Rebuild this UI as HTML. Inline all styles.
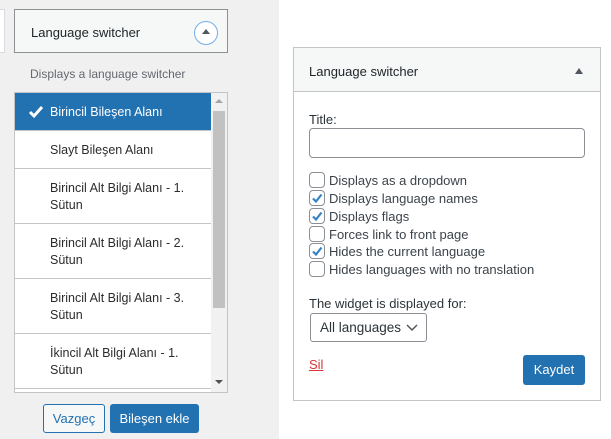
<!DOCTYPE html>
<html><head><meta charset="utf-8"><style>
*{box-sizing:border-box;margin:0;padding:0}
body{width:611px;height:439px;background:#fff;font-family:"Liberation Sans",sans-serif;font-size:13px;color:#1d2327;position:relative;overflow:hidden}
.a{position:absolute}
.gray{left:0;top:0;width:279px;height:439px;background:#f0f0f1}
.row{position:absolute;left:0;width:196px;border-bottom:1px solid #c3c4c7;padding-left:35px;padding-top:2px;display:flex;align-items:center;line-height:17px;font-size:12.5px;color:#2c2c2c}
.cb{position:absolute;left:309px;width:16px;height:16px;border:1px solid #8c8f94;border-radius:4px;background:#fff}
.lbl{position:absolute;left:329px;font-size:13px;color:#3c434a}
</style></head><body>
<div class="a gray"></div>
<div class="a" style="left:-5px;top:9px;width:10px;height:44px;background:#fff;border:1px solid #dcdcde"></div>
<div class="a" style="left:14px;top:9px;width:214px;height:44px;background:#f6f7f7;border:1px solid #8c8f94"></div>
<div class="a" style="left:31px;top:25px;font-size:13px;color:#1d2327">Language switcher</div>
<div class="a" style="left:194px;top:21px;width:24px;height:24px;border:1px solid #72aee6;border-radius:50%;background:#fff"></div>
<div class="a" style="left:202px;top:29px;width:0;height:0;border-left:4px solid transparent;border-right:4px solid transparent;border-bottom:5px solid #50575e"></div>
<div class="a" style="left:30px;top:67px;font-size:12px;color:#646970">Displays a language switcher</div>
<div class="a" style="left:14px;top:92px;width:214px;height:301px;background:#fff;border:1px solid #c3c4c7;overflow:hidden">
 <div class="row" style="top:0;height:38px;background:#2271b1;color:#fff;border-bottom:1px solid #c3c4c7"><svg class="a" style="left:13px;top:12px" width="16" height="14"><path d="M2 7l4 4 8-9" fill="none" stroke="#fff" stroke-width="3"/></svg>Birincil Bileşen Alanı</div>
 <div class="row" style="top:38px;height:38px">Slayt Bileşen Alanı</div>
 <div class="row" style="top:76px;height:55px">Birincil Alt Bilgi Alanı - 1.<br>Sütun</div>
 <div class="row" style="top:131px;height:55px">Birincil Alt Bilgi Alanı - 2.<br>Sütun</div>
 <div class="row" style="top:186px;height:55px">Birincil Alt Bilgi Alanı - 3.<br>Sütun</div>
 <div class="row" style="top:241px;height:55px">İkincil Alt Bilgi Alanı - 1.<br>Sütun</div>
 <div class="a" style="left:196px;top:0;width:17px;height:300px;background:#f1f1f1"></div>
 <div class="a" style="left:198px;top:18px;width:12px;height:197px;background:#c1c1c1"></div>
 <div class="a" style="left:200px;top:6px;border-left:4px solid transparent;border-right:4px solid transparent;border-bottom:4px solid #a3a3a3"></div>
 <div class="a" style="left:200px;top:287px;border-left:4px solid transparent;border-right:4px solid transparent;border-top:4px solid #505050"></div>
</div>
<div class="a" style="left:43px;top:404px;width:62px;height:29px;border:1px solid #2271b1;border-radius:3px;background:#f6f7f7;color:#2271b1;text-align:center;line-height:27px">Vazgeç</div>
<div class="a" style="left:110px;top:404px;width:89px;height:29px;border-radius:3px;background:#2271b1;color:#fff;text-align:center;line-height:29px">Bileşen ekle</div>

<div class="a" style="left:293px;top:47px;width:308px;height:354px;border:1px solid #c3c4c7;background:#fff"></div>
<div class="a" style="left:294px;top:48px;width:306px;height:44px;background:#f6f7f7;border-bottom:1px solid #c3c4c7"></div>
<div class="a" style="left:309px;top:64px;color:#1d2327">Language switcher</div>
<div class="a" style="left:575px;top:68px;border-left:4px solid transparent;border-right:4px solid transparent;border-bottom:6px solid #50575e"></div>
<div class="a" style="left:309px;top:112px;color:#2c3338">Title:</div>
<div class="a" style="left:309px;top:128px;width:276px;height:30px;border:1px solid #8c8f94;border-radius:4px"></div>
<div class="cb" style="top:172px"></div><div class="lbl" style="top:173px">Displays as a dropdown</div>
<div class="cb" style="top:190px"></div><div class="lbl" style="top:191px">Displays language names</div>
<div class="cb" style="top:208px"></div><div class="lbl" style="top:209px">Displays flags</div>
<div class="cb" style="top:226px"></div><div class="lbl" style="top:227px">Forces link to front page</div>
<div class="cb" style="top:243px"></div><div class="lbl" style="top:244px">Hides the current language</div>
<div class="cb" style="top:261px"></div><div class="lbl" style="top:262px">Hides languages with no translation</div>
<svg class="a" style="left:309px;top:190px" width="16" height="72"><g fill="none" stroke="#3582c4" stroke-width="2.2"><path d="M4 8.5l3 3 5.5-7"/><path d="M4 26.5l3 3 5.5-7"/><path d="M4 61.5l3 3 5.5-7"/></g></svg>
<div class="a" style="left:309px;top:296px;color:#2c3338">The widget is displayed for:</div>
<div class="a" style="left:310px;top:313px;width:117px;height:29px;border:1px solid #8c8f94;border-radius:3px;padding-left:9px;line-height:27px;font-size:13.5px;color:#2c3338">All languages</div>
<svg class="a" style="left:406px;top:324px" width="12" height="8"><path d="M1 1l5 5 5-5" fill="none" stroke="#50575e" stroke-width="1.5"/></svg>
<div class="a" style="left:309px;top:357px;color:#d63638;text-decoration:underline">Sil</div>
<div class="a" style="left:523px;top:355px;width:62px;height:30px;border-radius:3px;background:#2271b1;color:#fff;text-align:center;line-height:30px">Kaydet</div>
</body></html>
